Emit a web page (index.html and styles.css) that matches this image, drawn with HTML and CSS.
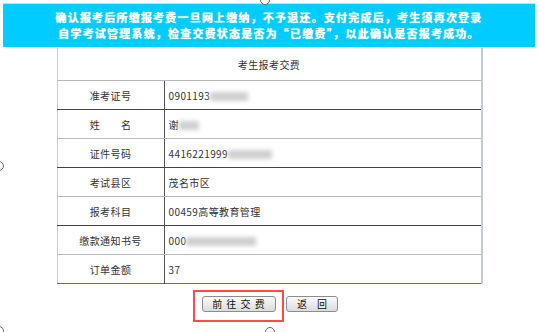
FILE: index.html
```html
<!DOCTYPE html>
<html lang="zh-CN">
<head>
    <meta charset="UTF-8">
    <title>考生报考交费</title>
    <link rel="stylesheet" href="styles.css">
</head>
<body>
    <div class="notice">
        <p>确认报考后所缴报考费一旦网上缴纳，不予退还。支付完成后，考生须再次登录</p>
        <p>自学考试管理系统，检查交费状态是否为“已缴费”，以此确认是否报考成功。</p>
    </div>

    <!-- 报考交费信息 -->
    <table class="pay-table">
        <tr class="head-row">
            <td colspan="2">考生报考交费</td>
        </tr>
        <tr class="dark">
            <td class="label">准考证号</td>
            <td>0901193<span class="blur" style="width:38px"></span></td>
        </tr>
        <tr class="light">
            <td class="label">姓&emsp;&emsp;名</td>
            <td>谢<span class="blur" style="width:20px"></span></td>
        </tr>
        <tr class="dark">
            <td class="label">证件号码</td>
            <td>4416221999<span class="blur" style="width:44px"></span></td>
        </tr>
        <tr class="light">
            <td class="label">考试县区</td>
            <td>茂名市区</td>
        </tr>
        <tr class="dark">
            <td class="label">报考科目</td>
            <td>00459高等教育管理</td>
        </tr>
        <tr class="light">
            <td class="label">缴款通知书号</td>
            <td>000<span class="blur" style="width:70px"></span></td>
        </tr>
        <tr class="last">
            <td class="label">订单金额</td>
            <td>37</td>
        </tr>
    </table>

    <div class="actions">
        <span class="mark">
            <button class="btn btn-pay">前 往 交 费</button>
        </span>
        <button class="btn btn-back">返&emsp;回</button>
    </div>

    <!-- 截图的选框手柄 -->
    <span class="handle h-top"></span>
    <span class="handle h-left"></span>
    <span class="handle h-left-bottom"></span>
    <span class="handle h-bottom"></span>
</body>
</html>
```

FILE: styles.css
```css
html, body {
    margin: 0;
    padding: 0;
    background: #fff;
}
body {
    position: relative;
    width: 539px;
    height: 332px;
    overflow: hidden;
    font-family: "Noto Sans CJK SC", "DejaVu Sans", sans-serif;
    color: #222;
}
.notice {
    margin: 3px 4px 0 3px;
    height: 44px;
    box-sizing: border-box;
    padding-top: 5px;
    background-color: #00ccff;
    border-top: 1px solid #d8d8d8;
    color: #fff;
    font-size: 11px;
    font-weight: bold;
    letter-spacing: 1.2px;
    text-align: center;
    text-shadow: 0 0 1px #fff;
}
.notice p {
    margin: 0;
    height: 16px;
    line-height: 16px;
    white-space: nowrap;
}
.pay-table {
    width: 426px;
    margin: 1px auto 0;
    border-collapse: collapse;
    font-size: 10px;
    letter-spacing: 0.4px;
    color: #333;
    border-left: 1px solid #c8c8dc;
    border-right: 2px solid #c8c8dc;
    border-bottom: 1px solid #6a6a8a;
}
.pay-table td {
    padding: 0 0 0 4px;
    height: 28px;
    text-align: left;
    white-space: nowrap;
}
.pay-table td.label {
    width: 106px;
    padding: 0;
    text-align: center;
    border-right: 1px solid #555;
}
.head-row td {
    height: 32px;
    text-align: center;
    padding: 0;
    border-bottom: 1px solid #b8b8b8;
}
.dark td { border-bottom: 1px solid #444; }
.light td { border-bottom: 1px solid #b8b8b8; }
.blur {
    display: inline-block;
    height: 9px;
    vertical-align: middle;
    background: #cfcfcf;
    filter: blur(2px);
}
.actions {
    display: flex;
    align-items: flex-start;
    gap: 10px;
    margin: 12px 0 0 202px;
}
.mark {
    position: relative;
    display: block;
    height: 16px;
}
.mark::after {
    content: "";
    position: absolute;
    left: -9px;
    top: -6px;
    width: 87px;
    height: 28px;
    border: 2px solid #ff4a4a;
}
.btn {
    display: block;
    height: 16px;
    padding: 0;
    font-family: "Noto Sans CJK SC", sans-serif;
    font-size: 10px;
    line-height: 14px;
    color: #111;
    background: linear-gradient(#fafafa, #dcdcdc);
    border: 1px solid #8c8c8c;
    border-radius: 3px;
}
.btn-pay {
    width: 74px;
    letter-spacing: 1px;
}
.btn-back {
    width: 52px;
}
.handle {
    position: absolute;
    width: 8px;
    height: 8px;
    border: 1px solid #666;
    border-radius: 50%;
    background: #fff;
}
.h-top { left: 260px; top: -5px; }
.h-left { left: -6px; top: 161px; }
.h-left-bottom { left: -6px; top: 326px; }
.h-bottom { left: 265px; top: 327px; }
```
